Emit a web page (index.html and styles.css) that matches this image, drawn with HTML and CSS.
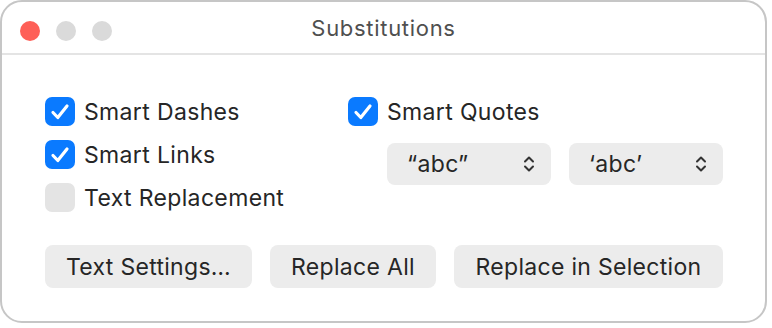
FILE: index.html
```html
<!DOCTYPE html>
<html lang="en">
<head>
  <meta charset="UTF-8">
  <title>Substitutions</title>
  <link rel="stylesheet" href="styles.css">
</head>
<body>
  <div class="window">
    <div class="titlebar">
      <div class="lights">
        <span class="light close"></span>
        <span class="light"></span>
        <span class="light"></span>
      </div>
      <div class="title">Substitutions</div>
    </div>

    <div class="content">
      <div class="options">
        <div class="column left">
          <label class="check"><span class="box on"><svg viewBox="0 0 30 29"><path d="M8 15.5l4.8 5L22 9"/></svg></span>Smart Dashes</label>
          <label class="check"><span class="box on"><svg viewBox="0 0 30 29"><path d="M8 15.5l4.8 5L22 9"/></svg></span>Smart Links</label>
          <label class="check"><span class="box"></span>Text Replacement</label>
        </div>
        <div class="column right">
          <label class="check"><span class="box on"><svg viewBox="0 0 30 29"><path d="M8 15.5l4.8 5L22 9"/></svg></span>Smart Quotes</label>
          <div class="popups">
            <div class="popup wide"><span>“abc”</span><svg class="chev" viewBox="0 0 12 16"><path d="M2 5.5l4-4 4 4M2 10.5l4 4 4-4"/></svg></div>
            <div class="popup"><span>‘abc’</span><svg class="chev" viewBox="0 0 12 16"><path d="M2 5.5l4-4 4 4M2 10.5l4 4 4-4"/></svg></div>
          </div>
        </div>
      </div>

      <div class="actions">
        <button class="btn b1">Text Settings…</button>
        <button class="btn b2">Replace All</button>
        <button class="btn b3">Replace in Selection</button>
      </div>
    </div>
  </div>
</body>
</html>
```

FILE: styles.css
```css
/* window frame */
body {
  margin: 0;
  background: #fff;
  font-family: Inter, "Noto Sans", sans-serif;
  color: #262626;
}
.window {
  width: 767px;
  height: 323px;
  box-sizing: border-box;
  border: 2px solid #c6c6c6;
  border-radius: 22px;
  background: #fff;
  overflow: hidden;
}
.titlebar {
  height: 51px;
  border-bottom: 2px solid #e4e4e4;
  display: flex;
  align-items: center;
  position: relative;
}
.lights {
  display: flex;
  gap: 16px;
  padding-left: 18px;
  padding-top: 6px;
}
.light {
  width: 20px;
  height: 20px;
  border-radius: 50%;
  background: #dadada;
}
.light.close {
  background: #fe5f57;
}
.title {
  position: absolute;
  left: 0;
  right: 0;
  top: 13px;
  text-align: center;
  font-size: 22px;
  letter-spacing: 0.7px;
  color: #4f4f4f;
}

/* body */
.content {
  padding: 35px 0 0 43px;
}
.options {
  display: flex;
}
.column.left {
  width: 303px;
}
.check {
  display: flex;
  align-items: center;
  height: 43px;
  font-size: 23px;
  letter-spacing: 0.35px;
}
.box {
  width: 30px;
  height: 29px;
  border-radius: 7px;
  background: #e4e4e4;
  margin-right: 9px;
  flex-shrink: 0;
}
.box.on {
  background: #0a7aff;
}
.box svg {
  width: 30px;
  height: 29px;
  display: block;
}
.box path {
  fill: none;
  stroke: #fff;
  stroke-width: 3.2;
  stroke-linecap: round;
  stroke-linejoin: round;
}
.popups {
  display: flex;
  gap: 18px;
  padding-left: 39px;
  margin-top: 10px;
}
.popup {
  width: 154px;
  height: 42px;
  box-sizing: border-box;
  border-radius: 8px;
  background: #ececec;
  display: flex;
  align-items: center;
  justify-content: space-between;
  padding: 0 16px 0 20px;
  font-size: 23px;
  letter-spacing: 0.35px;
}
.popup.wide {
  width: 164px;
}
.chev {
  width: 12px;
  height: 16px;
}
.chev path {
  fill: none;
  stroke: #333;
  stroke-width: 2;
  stroke-linecap: round;
  stroke-linejoin: round;
}
.actions {
  display: flex;
  gap: 18px;
  margin-top: 26px;
}
.btn {
  height: 43px;
  border: none;
  border-radius: 8px;
  background: #ececec;
  font-family: inherit;
  font-size: 23px;
  letter-spacing: 0.3px;
  color: #262626;
  padding: 0;
}
.b1 { width: 207px; }
.b2 { width: 166px; }
.b3 { width: 269px; }
```
